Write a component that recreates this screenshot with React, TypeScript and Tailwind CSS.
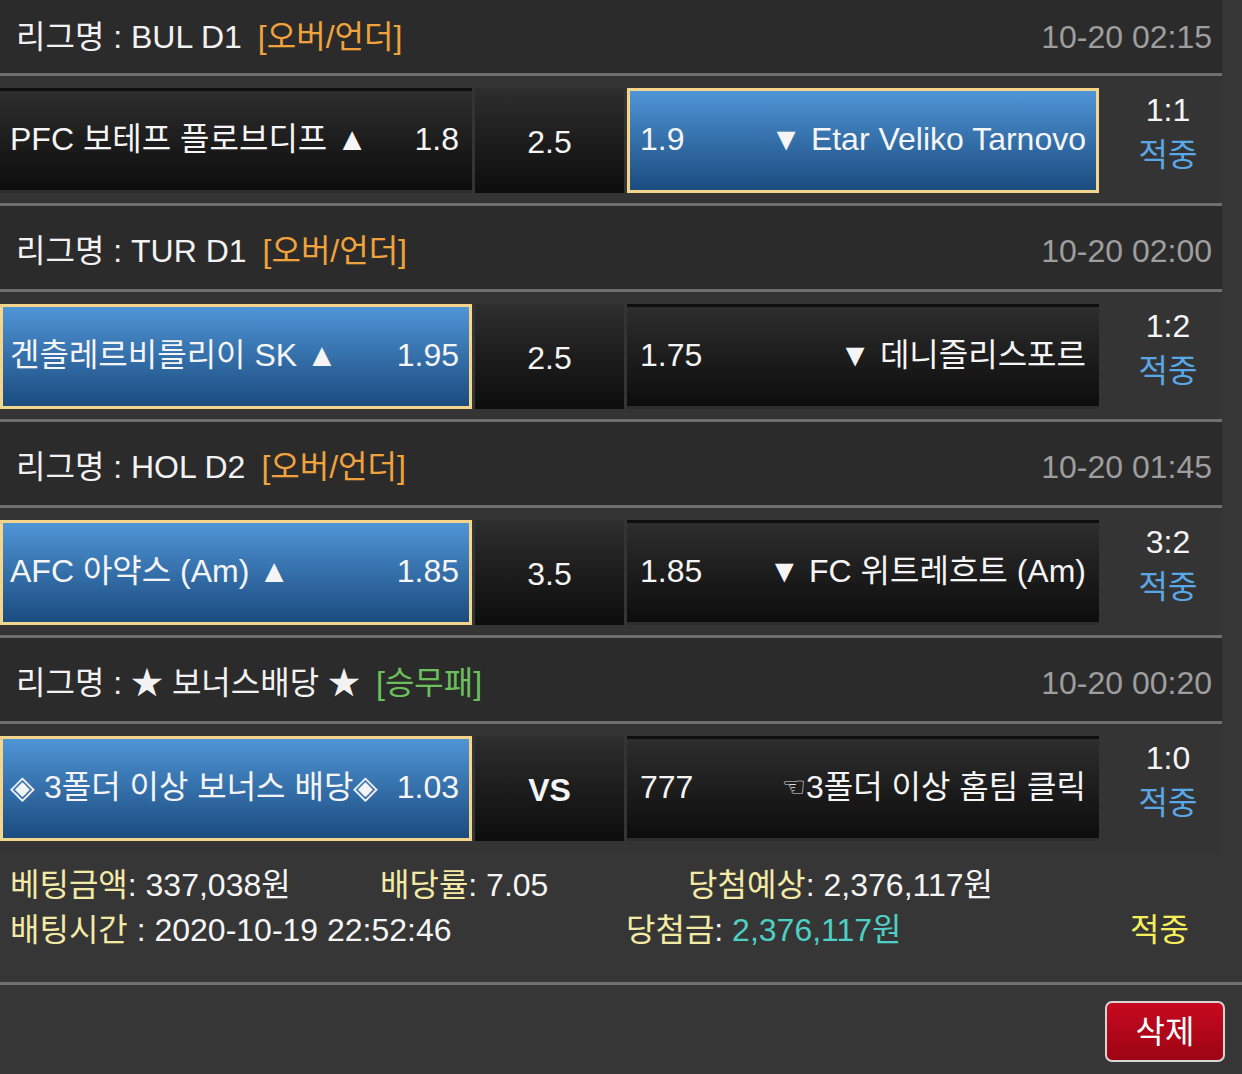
import React from "react";

type Match = {
  league: string;
  tag: string;
  tagColor: string;
  date: string;
  home: React.ReactNode;
  homeOdds: string;
  mid: string;
  midBold?: boolean;
  away: React.ReactNode;
  awayOdds: string;
  pick: "home" | "away";
  score: string;
};

const matches: Match[] = [
  {
    league: "BUL D1",
    tag: "[오버/언더]",
    tagColor: "text-[#f0a33c]",
    date: "10-20 02:15",
    home: "PFC 보테프 플로브디프 ▲",
    homeOdds: "1.8",
    mid: "2.5",
    away: "▼ Etar Veliko Tarnovo",
    awayOdds: "1.9",
    pick: "away",
    score: "1:1",
  },
  {
    league: "TUR D1",
    tag: "[오버/언더]",
    tagColor: "text-[#f0a33c]",
    date: "10-20 02:00",
    home: "겐츨레르비를리이 SK ▲",
    homeOdds: "1.95",
    mid: "2.5",
    away: "▼ 데니즐리스포르",
    awayOdds: "1.75",
    pick: "home",
    score: "1:2",
  },
  {
    league: "HOL D2",
    tag: "[오버/언더]",
    tagColor: "text-[#f0a33c]",
    date: "10-20 01:45",
    home: "AFC 아약스 (Am) ▲",
    homeOdds: "1.85",
    mid: "3.5",
    away: "▼ FC 위트레흐트 (Am)",
    awayOdds: "1.85",
    pick: "home",
    score: "3:2",
  },
  {
    league: "★ 보너스배당 ★",
    tag: "[승무패]",
    tagColor: "text-[#6cc05c]",
    date: "10-20 00:20",
    home: "◈ 3폴더 이상 보너스 배당◈",
    homeOdds: "1.03",
    mid: "VS",
    midBold: true,
    away: (
      <>
        <span className="text-[27px] font-['DejaVu_Sans'] text-[#e0e0e0] align-[2px]">☜</span>3폴더 이상 홈팀 클릭
      </>
    ),
    awayOdds: "777",
    pick: "home",
    score: "1:0",
  },
];

function Cell({ active, children }: { active: boolean; children: React.ReactNode }) {
  return (
    <div
      className={
        active
          ? "flex w-[472px] h-[105px] items-center justify-between px-[10px] pb-[4px] border-[3px] border-[#f4d58c] bg-gradient-to-b from-[#4f95d6] to-[#1b4c80] whitespace-nowrap"
          : "flex w-[472px] h-[105px] items-center justify-between px-[10px] pb-[4px] border-[3px] border-transparent bg-gradient-to-b from-[#2e2e2e] to-[#0d0d0d] whitespace-nowrap"
      }
    >
      {children}
    </div>
  );
}

function Section({ m, first, last }: { m: Match; first: boolean; last: boolean }) {
  return (
    <div>
      <div
        className={
          (first ? "h-[73px]" : "h-[83px] pt-[6px]") +
          " flex items-center justify-between pl-[16px] pr-[10px] bg-[#2b2b2b]"
        }
      >
        <div className="flex items-center gap-[16px]">
          <span className="text-[#f2f2f2]">리그명 : {m.league}</span>
          <span className={m.tagColor}>{m.tag}</span>
        </div>
        <span className="text-[#9e9e9e]">{m.date}</span>
      </div>
      <div className="h-[3px] bg-[#6f6f6f]" />
      <div className="flex h-[127px] pt-[12px] bg-[#343434] gap-[3px]">
        <Cell active={m.pick === "home"}>
          <span className="-ml-[3px]">{m.home}</span>
          <span>{m.homeOdds}</span>
        </Cell>
        <div className="flex w-[149px] h-[105px] items-center justify-center pt-[2px] bg-gradient-to-b from-[#2e2e2e] to-[#0d0d0d]">
          <span className={m.midBold ? "font-bold" : ""}>{m.mid}</span>
        </div>
        <Cell active={m.pick === "away"}>
          <span>{m.awayOdds}</span>
          <span>{m.away}</span>
        </Cell>
        <div className="flex flex-1 flex-col items-center pl-[12px] leading-[45px]">
          <span>{m.score}</span>
          <span className="text-[#5aa7e6]">적중</span>
        </div>
      </div>
      {!last && <div className="h-[3px] bg-[#6f6f6f]" />}
    </div>
  );
}

export default function App() {
  return (
    <div className="min-h-screen w-[1242px] bg-[#363636] text-[32px] text-[#f5f5f5] font-['Liberation_Sans','Noto_Sans_CJK_KR',sans-serif] overflow-hidden">
      <div className="w-[1222px]">
        {matches.map((m, i) => (
          <Section key={i} m={m} first={i === 0} last={i === matches.length - 1} />
        ))}
      </div>
      <div className="h-[131px] pt-[12px] pl-[10px] leading-[45px] whitespace-nowrap">
        <div className="flex">
          <span className="w-[370px]">
            <span className="text-[#f3eaa6]">베팅금액</span>: 337,038원
          </span>
          <span className="w-[308px]">
            <span className="text-[#f3eaa6]">배당률</span>: 7.05
          </span>
          <span>
            <span className="text-[#f3eaa6]">당첨예상</span>: 2,376,117원
          </span>
        </div>
        <div className="flex">
          <span className="w-[616px]">
            <span className="text-[#f3eaa6]">배팅시간</span> : 2020-10-19 22:52:46
          </span>
          <span className="w-[504px]">
            <span className="text-[#f3eaa6]">당첨금</span>: <span className="text-[#4fd0c6]">2,376,117원</span>
          </span>
          <span className="text-[#f6ef5c]">적중</span>
        </div>
      </div>
      <div className="h-[3px] bg-[#6f6f6f]" />
      <div className="flex justify-end pt-[16px] pr-[17px]">
        <button className="w-[120px] h-[61px] rounded-[7px] border-2 border-[#d9d4d4] bg-gradient-to-b from-[#c8091f] to-[#9c0514] text-[32px] text-white leading-none">
          삭제
        </button>
      </div>
    </div>
  );
}
